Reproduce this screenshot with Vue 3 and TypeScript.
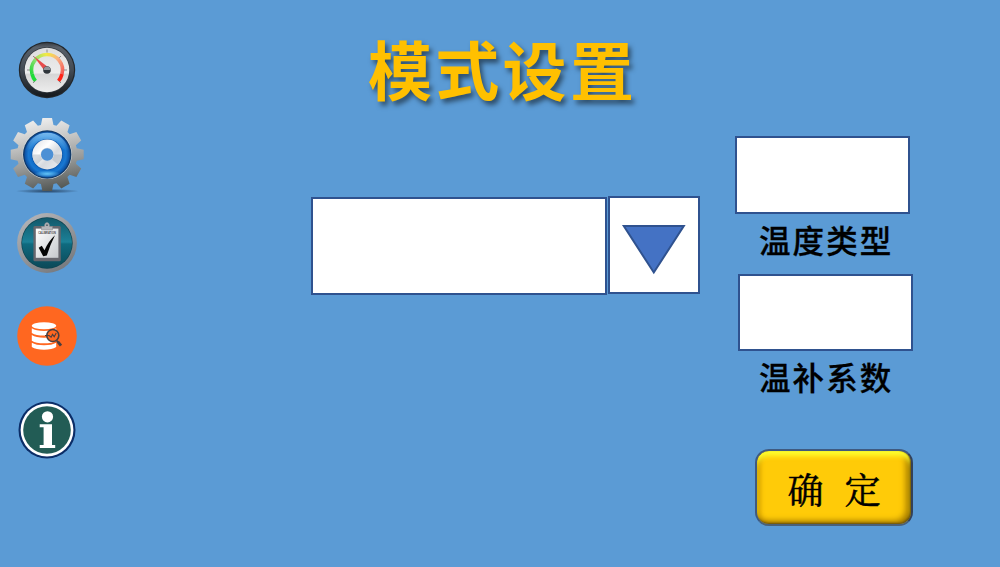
<script setup lang="ts">
import { ref } from 'vue'

const mode = ref('')
const temperatureType = ref('')
const compensation = ref('')

function polar(radius: number, degrees: number): string {
  const a = ((degrees - 90) * Math.PI) / 180
  return `${(radius * Math.cos(a)).toFixed(2)} ${(radius * Math.sin(a)).toFixed(2)}`
}

function gearOutline(teeth: number, root: number, tip: number): string {
  const points: string[] = []
  const step = 360 / teeth
  for (let i = 0; i < teeth; i++) {
    const c = i * step
    points.push(polar(root, c - 12), polar(tip, c - 7.5), polar(tip, c + 7.5), polar(root, c + 12))
  }
  return `M${points.join('L')}Z`
}

const gear = gearOutline(12, 30.2, 36.8)
</script>

<template>
  <div class="screen">
    <nav class="rail">
      <button class="nav gauge" aria-label="gauge">
        <svg width="60" height="60" viewBox="-30 -30 60 60">
          <defs>
            <linearGradient id="rim" x1="0" y1="0" x2="0" y2="1">
              <stop offset="0" stop-color="#3a3f45" /><stop offset=".08" stop-color="#596069" />
              <stop offset=".5" stop-color="#444c55" /><stop offset="1" stop-color="#15191d" />
            </linearGradient>
            <linearGradient id="dial" x1="0" y1="0" x2="0" y2="1">
              <stop offset="0" stop-color="#dedede" /><stop offset=".56" stop-color="#ececec" />
              <stop offset=".6" stop-color="#d6d6d6" /><stop offset="1" stop-color="#ededed" />
            </linearGradient>
            <linearGradient id="arcL" x1="0" y1="1" x2="1" y2="0">
              <stop offset="0" stop-color="#27d83c" /><stop offset=".5" stop-color="#8ee070" /><stop offset="1" stop-color="#f4ea45" />
            </linearGradient>
            <linearGradient id="arcR" x1="0" y1="0" x2="1" y2="1">
              <stop offset="0" stop-color="#f4e63e" /><stop offset=".45" stop-color="#f9b184" /><stop offset="1" stop-color="#f45a55" />
            </linearGradient>
          </defs>
          <circle r="28.2" fill="#22272c" />
          <circle r="27" fill="url(#rim)" />
          <circle r="23" fill="#33393f" />
          <circle r="22.3" fill="url(#dial)" />
          <path d="M-15 4A15.5 15.5 0 0 1 0-15.5" fill="none" stroke="url(#arcL)" stroke-width="3.6" />
          <path d="M0-15.5A15.5 15.5 0 0 1 15 4" fill="none" stroke="url(#arcR)" stroke-width="3.6" />
          <path d="M-15 4Q-14 8-11.5 11" fill="none" stroke="#1edc38" stroke-width="3.6" />
          <path d="M15 4Q14 8 11.5 11" fill="none" stroke="#ff2417" stroke-width="3.6" />
          <path d="M0-20.5V-17.5M-20 0H-17M20 0H17M-14-14l1.8 1.8M14-14l-1.8 1.8M-14 13l2-2M14 13l-2-2" stroke="#777" stroke-width=".8" />
          <path d="M-13.5-14L2.2-2L-1.5 2Z" fill="#e64b4b" />
          <circle r="3.8" fill="#30363b" /><path d="M-3.4 0A3.4 3.4 0 0 1 3.4 0Z" fill="#8e9499" />
        </svg>
      </button>

      <button class="nav settings" aria-label="settings">
        <svg width="80" height="84" viewBox="-40.2 -40.5 80 84">
          <defs>
            <linearGradient id="steel" x1=".35" y1="0" x2=".55" y2="1">
              <stop offset="0" stop-color="#f0f0f0" /><stop offset=".3" stop-color="#c9c9c8" />
              <stop offset=".62" stop-color="#999b9a" /><stop offset="1" stop-color="#525653" />
            </linearGradient>
            <radialGradient id="blue" cx=".5" cy=".5" r=".5">
              <stop offset=".55" stop-color="#0c62bd" /><stop offset=".82" stop-color="#1878d2" /><stop offset="1" stop-color="#0a4c9e" />
            </radialGradient>
            <linearGradient id="silver" x1="0" y1="0" x2="1" y2="1">
              <stop offset="0" stop-color="#d9dce1" /><stop offset=".35" stop-color="#ffffff" />
              <stop offset=".6" stop-color="#d5d9de" /><stop offset="1" stop-color="#eef0f3" />
            </linearGradient>
            <linearGradient id="gloss" x1="0" y1="0" x2="0" y2="1">
              <stop offset="0" stop-color="#8ccaf8" stop-opacity=".85" /><stop offset="1" stop-color="#69b7f2" stop-opacity="0" />
            </linearGradient>
            <radialGradient id="floor">
              <stop offset="0" stop-color="#1d3450" stop-opacity=".85" /><stop offset="1" stop-color="#1d3450" stop-opacity="0" />
            </radialGradient>
            <radialGradient id="glow">
              <stop offset="0" stop-color="#64c4f7" /><stop offset="1" stop-color="#64c4f7" stop-opacity="0" />
            </radialGradient>
          </defs>
          <ellipse cx="0" cy="36.6" rx="32" ry="2.4" fill="url(#floor)" />
          <path :d="gear" fill="url(#steel)" />
          <circle r="24.6" fill="#e0e4e6" />
          <circle r="24.2" fill="#123a68" />
          <circle r="22.9" fill="url(#blue)" />
          <path d="M-21.5-3A21.7 21.7 0 0 1 21.5-3Q0-14-21.5-3" fill="url(#gloss)" />
          <ellipse cy="19.4" rx="13" ry="3.4" fill="url(#glow)" />
          <circle r="15.6" fill="#0a55aa" />
          <circle r="14.9" fill="url(#silver)" />
          <path d="M-7 0H-14.8A14.8 14.8 0 0 0-10.8 10.2L-5 5ZM7 0H14.8A14.8 14.8 0 0 1 10.8 10.2L5 5Z" fill="#aeb5be" opacity=".5" />
          <circle r="6.8" fill="#d8dde3" />
          <circle r="6.2" fill="#4c90d5" />
        </svg>
      </button>

      <button class="nav calibration" aria-label="calibration">
        <svg width="62" height="62" viewBox="-31 -31 62 62">
          <defs>
            <linearGradient id="ring" x1=".2" y1="0" x2=".8" y2="1">
              <stop offset="0" stop-color="#b4b5b8" /><stop offset=".5" stop-color="#95979b" /><stop offset="1" stop-color="#73767b" />
            </linearGradient>
            <linearGradient id="teal" x1="0" y1="0" x2="0" y2="1">
              <stop offset="0" stop-color="#12586a" /><stop offset=".48" stop-color="#1c8198" />
              <stop offset=".52" stop-color="#0f6a7f" /><stop offset="1" stop-color="#0b4958" />
            </linearGradient>
            <linearGradient id="paper" x1="0" y1="0" x2="1" y2="1">
              <stop offset="0" stop-color="#fff" /><stop offset="1" stop-color="#c6c9cd" />
            </linearGradient>
          </defs>
          <circle r="29.9" fill="url(#ring)" />
          <circle r="25.7" fill="#0d4451" />
          <circle r="25" fill="url(#teal)" />
          <rect x="-13.6" y="-17" width="27.4" height="35.3" rx="1.5" fill="#66666d" />
          <rect x="-11.2" y="-14.4" width="22.6" height="29.2" fill="url(#paper)" />
          <path d="M-5.5-13V-16.5H-2.6Q-2.5-20.4 0-20.4T2.6-16.5H5.5V-13Z" fill="#b2b5b9" stroke="#85888d" stroke-width=".5" />
          <circle cy="-17.8" r=".9" fill="#4c5a62" />
          <text class="sheet-title" y="-8.8" text-anchor="middle" textLength="17.5" lengthAdjust="spacingAndGlyphs">CALIBRATION</text>
          <path d="M-8.3 4.7L-5.2 2.7L-2.5 7.2Q1.5-2 8-7.8Q3 2-.2 12.5L-3.8 13.3Z" fill="#050505" />
        </svg>
      </button>

      <button class="nav records" aria-label="records">
        <svg width="62" height="62" viewBox="-31 -31 62 62">
          <circle r="29.8" fill="#ff6720" />
          <g fill="#fff">
            <ellipse cx="-3" cy="-10.3" rx="12.2" ry="3.5" />
            <path d="M-15.2-7.7Q-11-5-3-5T9.2-7.7V-3Q5-.4-3-.4T-15.2-3Z" />
            <path d="M-15.2-1Q-11 1.7-3 1.7T9.2-1V4.7Q5 7.3-3 7.3T-15.2 4.7Z" />
            <path d="M-15.2 6.7Q-11 9.2-3 9.2T9.2 6.7V11Q5 13.8-3 13.8T-15.2 11Z" />
          </g>
          <path d="M9.6 4.4L12.5 8" stroke="#4a3e3d" stroke-width="1.6" />
          <circle cx="5.8" cy="-.5" r="6" fill="#ff6720" stroke="#4a3e3d" stroke-width="1.6" />
          <path d="M10.8 5.6L14 9.7" stroke="#4a3e3d" stroke-width="2.8" />
          <path d="M-2-.5H2L4.1 1.2L5.5-1.6L7.2.7L9.2-3" fill="none" stroke="#4a3e3d" stroke-width="1.1" />
        </svg>
      </button>

      <button class="nav info" aria-label="info">
        <svg width="60" height="60" viewBox="-30 -30 60 60">
          <circle r="28.5" fill="#0b2d67" />
          <circle r="26.4" fill="#fff" />
          <circle r="23.8" fill="#225c55" />
          <circle cx=".5" cy="-13.2" r="5.6" fill="#fff" />
          <path d="M-7.3-5.8H5V15H8.2V18H-7.3V15H-3.4V-2.8H-7.3Z" fill="#fff" />
        </svg>
      </button>
    </nav>

    <main class="content">
      <h1 class="title">模式设置</h1>
      <div class="work">
        <div class="combo">
          <div class="combo-value">{{ mode }}</div>
          <button class="combo-toggle" aria-label="open">
            <svg width="66" height="54" viewBox="0 0 66 54">
              <path d="M2.8 3H62.8L32.8 49.5Z" fill="#4472c4" stroke="#2f528f" stroke-width="2" />
            </svg>
          </button>
        </div>
        <section class="panel">
          <div class="field first">{{ temperatureType }}</div>
          <div class="label">温度类型</div>
          <div class="field second">{{ compensation }}</div>
          <div class="label">温补系数</div>
          <button class="confirm"><span>确</span><span>定</span></button>
        </section>
      </div>
    </main>
  </div>
</template>

<style>
body {
  margin: 0;
  background: #5b9bd5;
}
</style>

<style scoped>
.screen {
  display: flex;
  width: 1000px;
  height: 567px;
  overflow: hidden;
  background: #5b9bd5;
  font-family: "Liberation Sans", "Noto Sans CJK SC", sans-serif;
}
button {
  padding: 0;
  border: 0;
  background: none;
  cursor: pointer;
}
svg {
  display: block;
}
.rail {
  display: flex;
  flex-direction: column;
  align-items: center;
  flex: none;
  width: 94px;
  padding-top: 40px;
  box-sizing: border-box;
}
.nav {
  flex: none;
}
.settings {
  margin-top: 14px;
}
.calibration {
  margin-top: 14px;
}
.records {
  margin-top: 31px;
}
.info {
  margin-top: 33px;
}
.sheet-title {
  font: bold 3.4px "Liberation Sans", sans-serif;
  fill: #444;
}
.content {
  flex: 1;
}
.title {
  height: 96px;
  margin: 25px 0 0 274px;
  color: #ffc000;
  font-size: 64px;
  font-weight: 700;
  line-height: 96px;
  letter-spacing: 3.3px;
  white-space: nowrap;
  text-shadow: 3px 4px 5px rgba(0, 0, 0, 0.5);
}
.work {
  display: flex;
  align-items: flex-start;
  margin-top: 15px;
}
.combo {
  display: flex;
  align-items: flex-start;
  gap: 1px;
  margin: 60px 0 0 217px;
}
.combo-value,
.combo-toggle,
.field {
  box-sizing: border-box;
  border: 2px solid #2f528f;
  background: #fff;
}
.combo-value {
  width: 296px;
  height: 98px;
  margin-top: 1px;
}
.combo-toggle {
  display: flex;
  justify-content: center;
  width: 92px;
  height: 98px;
  padding-top: 25px;
}
.panel {
  display: flex;
  flex-direction: column;
  margin-left: 35px;
}
.field {
  width: 175px;
}
.first {
  height: 78px;
}
.second {
  height: 77px;
  margin: 10px 0 0 3px;
}
.label {
  height: 50px;
  margin-left: 24px;
  color: #000;
  font-size: 31.5px;
  font-weight: 500;
  line-height: 56px;
  letter-spacing: 2.1px;
  white-space: nowrap;
  -webkit-text-stroke: 0.3px #000;
}
.confirm {
  display: flex;
  align-items: center;
  justify-content: center;
  gap: 21px;
  width: 158px;
  height: 77px;
  margin: 48px 0 0 20px;
  padding-top: 3px;
  box-sizing: border-box;
  border: 2px solid;
  border-color: #3f5a80 #33415a #4a6078 #3f5a80;
  border-radius: 14px;
  background: #ffcb08;
  box-shadow:
    inset -1px -1px 2px #6b5208,
    inset 0 6px 5px -1px #ffff2e,
    inset -5px -3px 6px #a37a00,
    inset 3px 0 5px #c99400;
  color: #000;
  font-family: "Noto Serif CJK SC", "Noto Sans CJK SC", serif;
  font-size: 36px;
  font-weight: 400;
  line-height: 50px;
  -webkit-text-stroke: 0.5px #000;
}
</style>
